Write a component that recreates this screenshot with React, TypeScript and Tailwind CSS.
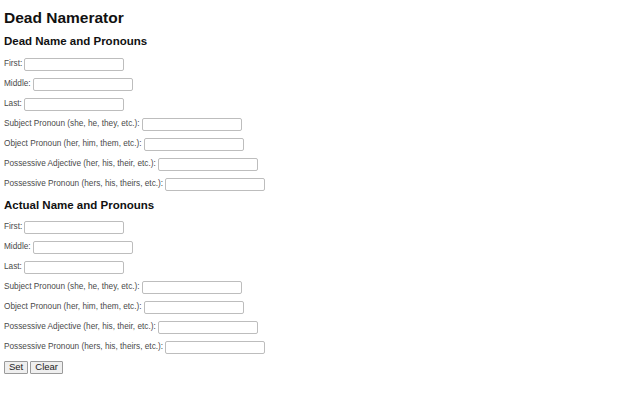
const fields = [
  "First:",
  "Middle:",
  "Last:",
  "Subject Pronoun (she, he, they, etc.):",
  "Object Pronoun (her, him, them, etc.):",
  "Possessive Adjective (her, his, their, etc.):",
  "Possessive Pronoun (hers, his, theirs, etc.):",
]

function Field({ label }: { label: string }) {
  return (
    <div className="flex h-[20px] items-center">
      <label className="text-[8.25px] leading-none text-[#4a4a4a]">{label}</label>
      <input
        type="text"
        className="ml-[2px] h-[13px] w-[100px] rounded-[2px] border border-[#bdbdbd] bg-white outline-none"
      />
    </div>
  )
}

function Section({ title, last }: { title: string; last?: boolean }) {
  return (
    <section>
      <h3
        className={
          last
            ? "flex h-[23px] items-center text-[11.5px] font-bold text-[#111]"
            : "flex h-[24px] items-center text-[11.5px] font-bold text-[#111]"
        }
      >
        {title}
      </h3>
      {fields.map((f) => (
        <Field key={f} label={f} />
      ))}
    </section>
  )
}

export default function App() {
  return (
    <div className="h-[400px] w-[640px] bg-white pl-[4px] pt-[6px] font-['Liberation_Sans',Arial,sans-serif]">
      <h1 className="flex h-[24px] items-center text-[15.5px] font-bold text-[#111]">
        Dead Namerator
      </h1>
      <Section title="Dead Name and Pronouns" />
      <Section title="Actual Name and Pronouns" last />
      <div className="flex h-[20px] items-center gap-[2px]">
        <button className="h-[13px] rounded-[1px] border border-[#9a9a9a] bg-[#efefef] px-[4px] text-[9.5px] leading-none text-[#222]">
          Set
        </button>
        <button className="h-[13px] rounded-[1px] border border-[#9a9a9a] bg-[#efefef] px-[4px] text-[9.5px] leading-none text-[#222]">
          Clear
        </button>
      </div>
    </div>
  )
}
